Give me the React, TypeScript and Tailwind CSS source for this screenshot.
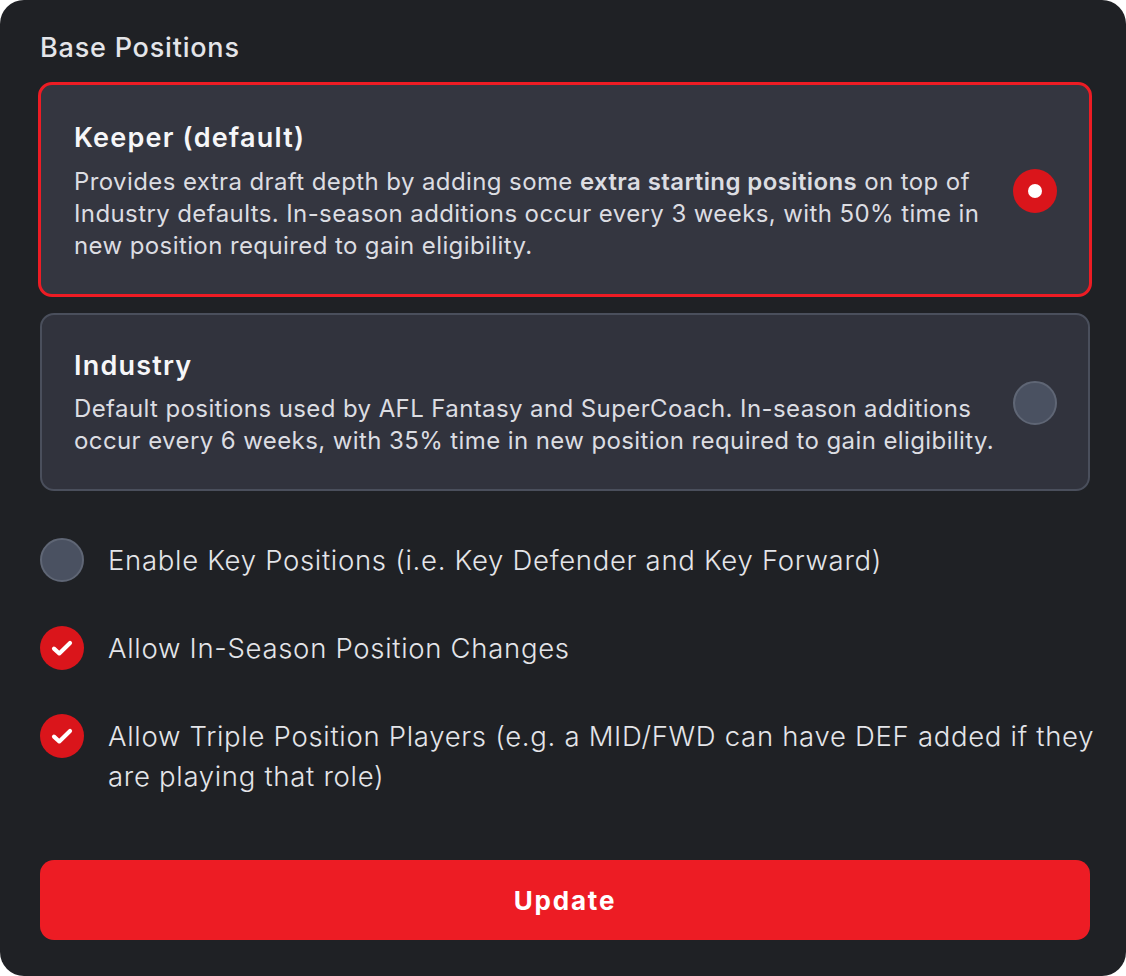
import { useState } from "react";

type PositionOption = {
  id: string;
  title: string;
  lines: React.ReactNode[];
};

const BASE_OPTIONS: PositionOption[] = [
  {
    id: "keeper",
    title: "Keeper (default)",
    lines: [
      <>
        Provides extra draft depth by adding some{" "}
        <span className="font-semibold">extra starting positions</span> on top of
      </>,
      "Industry defaults. In-season additions occur every 3 weeks, with 50% time in",
      "new position required to gain eligibility.",
    ],
  },
  {
    id: "industry",
    title: "Industry",
    lines: [
      "Default positions used by AFL Fantasy and SuperCoach. In-season additions",
      "occur every 6 weeks, with 35% time in new position required to gain eligibility.",
    ],
  },
];

const TOGGLES = [
  {
    id: "key",
    lines: ["Enable Key Positions (i.e. Key Defender and Key Forward)"],
    checked: false,
  },
  {
    id: "changes",
    lines: ["Allow In-Season Position Changes"],
    checked: true,
  },
  {
    id: "triple",
    lines: [
      "Allow Triple Position Players (e.g. a MID/FWD can have DEF added if they",
      "are playing that role)",
    ],
    checked: true,
  },
];

function Radio({ selected }: { selected: boolean }) {
  if (selected) {
    return (
      <span className="flex h-[44px] w-[44px] shrink-0 items-center justify-center rounded-full bg-[#da151b]">
        <span className="h-[14px] w-[14px] rounded-full bg-white" />
      </span>
    );
  }

  return (
    <span className="h-[44px] w-[44px] shrink-0 rounded-full border-2 border-[#5f6675] bg-[#4a5161]" />
  );
}

function CheckCircle({ checked }: { checked: boolean }) {
  if (!checked) {
    return (
      <span className="h-[44px] w-[44px] shrink-0 rounded-full border-2 border-[#5f6675] bg-[#4a5161]" />
    );
  }

  return (
    <span className="flex h-[44px] w-[44px] shrink-0 items-center justify-center rounded-full bg-[#da151b]">
      <svg width="26" height="26" viewBox="0 0 24 24" fill="none" aria-hidden="true">
        <path
          d="M4.6 12.6l4.9 4.4L19.4 7.4"
          stroke="white"
          strokeWidth="3.8"
          strokeLinecap="round"
          strokeLinejoin="round"
        />
      </svg>
    </span>
  );
}

export default function App() {
  const [selected, setSelected] = useState("keeper");

  return (
    <div className="bg-white font-['Inter',sans-serif]">
      <div className="flex h-[976px] w-[1126px] flex-col rounded-[24px] bg-[#1f2125] pt-[30px] pr-[36px] pl-[40px]">
        <h2 className="text-[27px] leading-[36px] font-medium tracking-[0.8px] text-[#e4e5e9]">
          Base Positions
        </h2>

        <div className="mt-[16px] flex flex-col gap-[16px]">
          {BASE_OPTIONS.map((option) => {
            const isSelected = option.id === selected;
            return (
              <button
                key={option.id}
                type="button"
                onClick={() => setSelected(option.id)}
                className={`flex items-center gap-[32px] rounded-[14px] text-left ${
                  isSelected
                    ? "-mx-[2px] border-[3px] border-[#ed1c24] bg-[#343640] pt-[35px] pr-[32px] pb-[32px] pl-[33px]"
                    : "border-2 border-[#4a4f5c] bg-[#31333d] pt-[33px] pr-[31px] pb-[32px] pl-[32px]"
                }`}
              >
                <div className="min-w-0 flex-1">
                  <div className="text-[27px] leading-[36px] font-semibold tracking-[1.2px] text-[#f6f6f8]">
                    {option.title}
                  </div>
                  <p
                    className={`${
                      isSelected ? "mt-[10px]" : "mt-[9px]"
                    } text-[24px] leading-[32px] tracking-[0.4px] whitespace-nowrap text-[#dcdde2]`}
                  >
                    {option.lines.map((line, index) => (
                      <span key={index} className="block">
                        {line}
                      </span>
                    ))}
                  </p>
                </div>
                <Radio selected={isSelected} />
              </button>
            );
          })}
        </div>

        <div className="mt-[47px] flex flex-col gap-[44px]">
          {TOGGLES.map((toggle) => (
            <div key={toggle.id} className="flex items-start gap-[24px]">
              <CheckCircle checked={toggle.checked} />
              <div className="pt-[2px] text-[27.5px] leading-[40px] font-light tracking-[0.7px] whitespace-nowrap text-[#e4e5e9]">
                {toggle.lines.map((line, index) => (
                  <span key={index} className="block">
                    {line}
                  </span>
                ))}
              </div>
            </div>
          ))}
        </div>

        <button
          type="button"
          className="mt-[64px] h-[80px] w-full rounded-[14px] bg-[#ed1c24] text-[26px] font-bold tracking-[1.8px] text-white"
        >
          Update
        </button>
      </div>
    </div>
  );
}
